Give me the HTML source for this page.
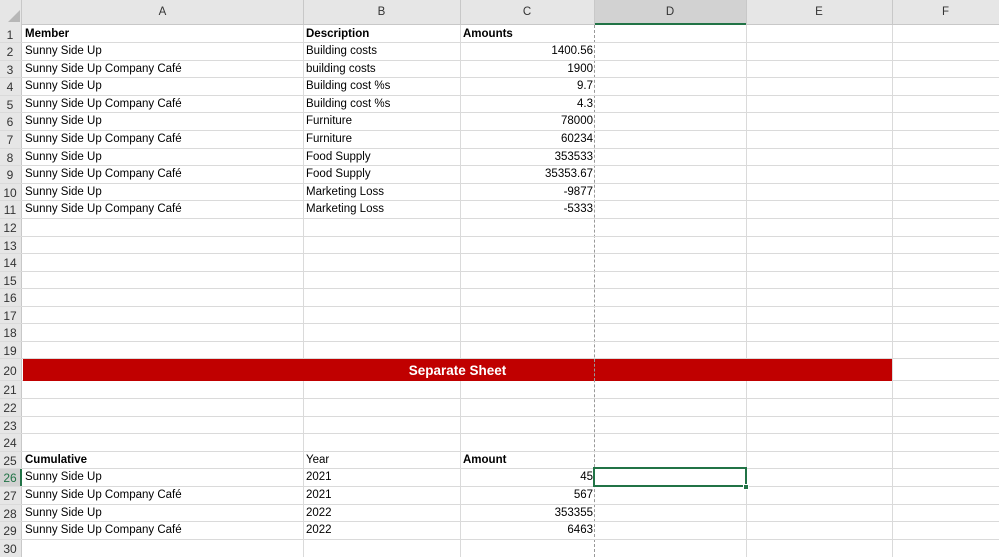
<!DOCTYPE html>
<html><head><meta charset="utf-8"><style>
*{margin:0;padding:0;box-sizing:border-box}
body{width:999px;height:557px;overflow:hidden;background:#fff;font-family:"Liberation Sans",Arial,sans-serif;font-size:11.5px;color:#000;position:relative}
.hl{position:absolute;left:0;width:999px;height:1px;background:#dadada}
.vl{position:absolute;top:0;width:1px;height:557px;background:#dadada}
.t{position:absolute;white-space:nowrap;line-height:19px}
.n{position:absolute;left:0;width:20px;text-align:center;color:#333;line-height:18px;font-size:12px}
.r{text-align:right}
.b{font-weight:bold}
</style></head><body>
<div style="position:absolute;left:0;top:0;width:999px;height:25px;background:#e6e6e6;border-bottom:1px solid #c8c8c8"></div>
<div style="position:absolute;left:0;top:0;width:22px;height:557px;background:#e6e6e6;border-right:1px solid #c8c8c8"></div>
<div style="position:absolute;left:594px;top:0;width:152px;height:25px;background:#d2d2d2;border-bottom:2px solid #217346"></div>
<div style="position:absolute;left:0;top:469px;width:22px;height:18px;background:#d2d2d2;border-right:2px solid #217346"></div>
<svg style="position:absolute;left:8px;top:10px" width="12" height="12"><polygon points="12,0 12,12 0,12" fill="#b7b7b7"/></svg>
<div class="t" style="left:22px;width:281px;top:3px;text-align:center;color:#333">A</div>
<div class="t" style="left:303px;width:157px;top:3px;text-align:center;color:#333">B</div>
<div class="t" style="left:460px;width:134px;top:3px;text-align:center;color:#333">C</div>
<div class="t" style="left:594px;width:152px;top:3px;text-align:center;color:#333">D</div>
<div class="t" style="left:746px;width:146px;top:3px;text-align:center;color:#333">E</div>
<div class="t" style="left:892px;width:107px;top:3px;text-align:center;color:#333">F</div>
<div class="vl" style="left:303px"></div>
<div class="vl" style="left:460px"></div>
<div class="vl" style="left:746px"></div>
<div class="vl" style="left:892px"></div>
<div style="position:absolute;left:594px;top:25px;height:532px;border-left:1px dashed #999"></div>
<div class="vl" style="left:303px;height:25px;background:#c8c8c8"></div>
<div class="vl" style="left:460px;height:25px;background:#c8c8c8"></div>
<div class="vl" style="left:594px;height:25px;background:#c8c8c8"></div>
<div class="vl" style="left:746px;height:25px;background:#c8c8c8"></div>
<div class="vl" style="left:892px;height:25px;background:#c8c8c8"></div>
<div class="hl" style="top:42px"></div><div class="hl" style="top:60px"></div><div class="hl" style="top:77px"></div><div class="hl" style="top:95px"></div><div class="hl" style="top:112px"></div><div class="hl" style="top:130px"></div><div class="hl" style="top:148px"></div><div class="hl" style="top:165px"></div><div class="hl" style="top:183px"></div><div class="hl" style="top:200px"></div><div class="hl" style="top:218px"></div><div class="hl" style="top:236px"></div><div class="hl" style="top:253px"></div><div class="hl" style="top:271px"></div><div class="hl" style="top:288px"></div><div class="hl" style="top:306px"></div><div class="hl" style="top:323px"></div><div class="hl" style="top:341px"></div><div class="hl" style="top:358px"></div><div class="hl" style="top:380px"></div><div class="hl" style="top:398px"></div><div class="hl" style="top:416px"></div><div class="hl" style="top:433px"></div><div class="hl" style="top:451px"></div><div class="hl" style="top:468px"></div><div class="hl" style="top:486px"></div><div class="hl" style="top:504px"></div><div class="hl" style="top:521px"></div><div class="hl" style="top:539px"></div>
<div class="n" style="top:26px">1</div><div class="n" style="top:43px">2</div><div class="n" style="top:61px">3</div><div class="n" style="top:78px">4</div><div class="n" style="top:96px">5</div><div class="n" style="top:113px">6</div><div class="n" style="top:131px">7</div><div class="n" style="top:149px">8</div><div class="n" style="top:166px">9</div><div class="n" style="top:184px">10</div><div class="n" style="top:201px">11</div><div class="n" style="top:219px">12</div><div class="n" style="top:237px">13</div><div class="n" style="top:254px">14</div><div class="n" style="top:272px">15</div><div class="n" style="top:289px">16</div><div class="n" style="top:307px">17</div><div class="n" style="top:324px">18</div><div class="n" style="top:342px">19</div><div class="n" style="top:362px">20</div><div class="n" style="top:381px">21</div><div class="n" style="top:399px">22</div><div class="n" style="top:417px">23</div><div class="n" style="top:434px">24</div><div class="n" style="top:452px">25</div><div class="n" style="top:469px;color:#217346">26</div><div class="n" style="top:487px">27</div><div class="n" style="top:505px">28</div><div class="n" style="top:522px">29</div><div class="n" style="top:540px">30</div>
<div class="t b" style="left:25px;top:25px">Member</div><div class="t b" style="left:306px;top:25px">Description</div><div class="t b" style="left:463px;top:25px">Amounts</div>
<div class="t" style="left:25px;top:42px">Sunny Side Up</div><div class="t" style="left:306px;top:42px">Building costs</div><div class="t r" style="right:406px;top:42px">1400.56</div>
<div class="t" style="left:25px;top:60px">Sunny Side Up Company Café</div><div class="t" style="left:306px;top:60px">building costs</div><div class="t r" style="right:406px;top:60px">1900</div>
<div class="t" style="left:25px;top:77px">Sunny Side Up</div><div class="t" style="left:306px;top:77px">Building cost %s</div><div class="t r" style="right:406px;top:77px">9.7</div>
<div class="t" style="left:25px;top:95px">Sunny Side Up Company Café</div><div class="t" style="left:306px;top:95px">Building cost %s</div><div class="t r" style="right:406px;top:95px">4.3</div>
<div class="t" style="left:25px;top:112px">Sunny Side Up</div><div class="t" style="left:306px;top:112px">Furniture</div><div class="t r" style="right:406px;top:112px">78000</div>
<div class="t" style="left:25px;top:130px">Sunny Side Up Company Café</div><div class="t" style="left:306px;top:130px">Furniture</div><div class="t r" style="right:406px;top:130px">60234</div>
<div class="t" style="left:25px;top:148px">Sunny Side Up</div><div class="t" style="left:306px;top:148px">Food Supply</div><div class="t r" style="right:406px;top:148px">353533</div>
<div class="t" style="left:25px;top:165px">Sunny Side Up Company Café</div><div class="t" style="left:306px;top:165px">Food Supply</div><div class="t r" style="right:406px;top:165px">35353.67</div>
<div class="t" style="left:25px;top:183px">Sunny Side Up</div><div class="t" style="left:306px;top:183px">Marketing Loss</div><div class="t r" style="right:406px;top:183px">-9877</div>
<div class="t" style="left:25px;top:200px">Sunny Side Up Company Café</div><div class="t" style="left:306px;top:200px">Marketing Loss</div><div class="t r" style="right:406px;top:200px">-5333</div>
<div style="position:absolute;left:23px;top:359px;width:869px;height:22px;background:#c00000"></div>
<div style="position:absolute;left:594px;top:359px;height:22px;border-left:1px dashed #999"></div>
<div class="t b" style="left:23px;width:869px;top:361px;text-align:center;color:#fff;font-size:13.5px">Separate Sheet</div>
<div class="t b" style="left:25px;top:451px">Cumulative</div><div class="t" style="left:306px;top:451px">Year</div><div class="t b" style="left:463px;top:451px">Amount</div>
<div class="t" style="left:25px;top:468px">Sunny Side Up</div><div class="t" style="left:306px;top:468px">2021</div><div class="t r" style="right:406px;top:468px">45</div>
<div class="t" style="left:25px;top:486px">Sunny Side Up Company Café</div><div class="t" style="left:306px;top:486px">2021</div><div class="t r" style="right:406px;top:486px">567</div>
<div class="t" style="left:25px;top:504px">Sunny Side Up</div><div class="t" style="left:306px;top:504px">2022</div><div class="t r" style="right:406px;top:504px">353355</div>
<div class="t" style="left:25px;top:521px">Sunny Side Up Company Café</div><div class="t" style="left:306px;top:521px">2022</div><div class="t r" style="right:406px;top:521px">6463</div>
<div style="position:absolute;left:593px;top:467px;width:154px;height:20px;border:2px solid #217346"></div>
<div style="position:absolute;left:743px;top:484px;width:6px;height:6px;background:#217346;border:1px solid #fff"></div>
</body></html>
